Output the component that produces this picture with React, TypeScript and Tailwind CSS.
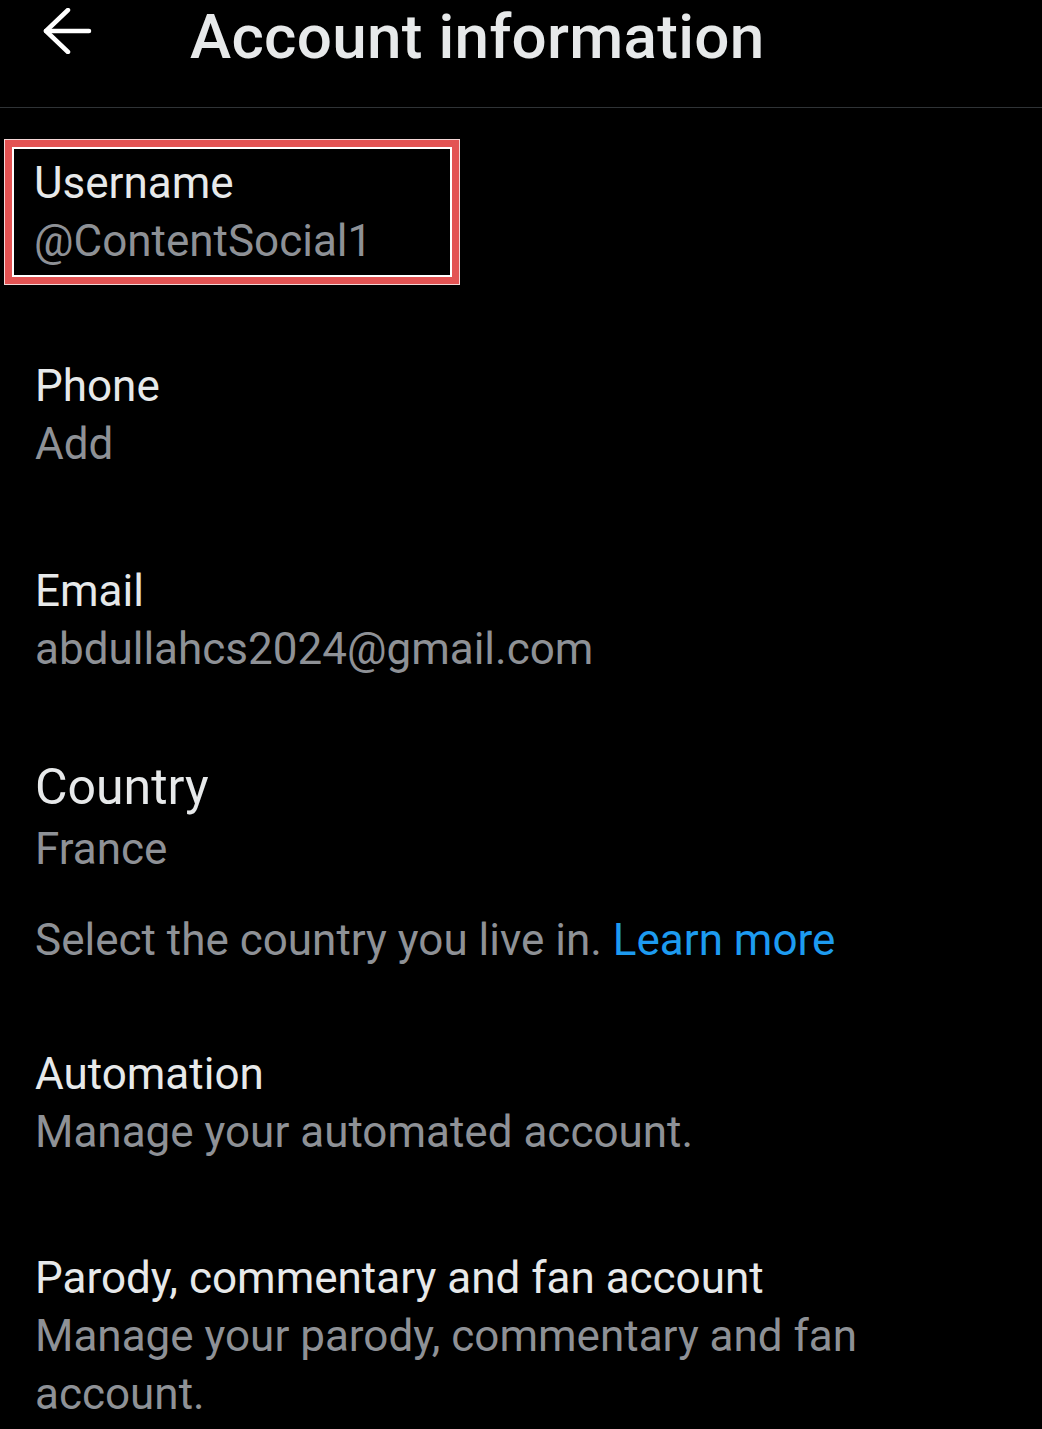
import React from 'react'

const LABEL = 'text-[44px] leading-[58px] text-[#e7e9ea]'
const VALUE = 'text-[44px] leading-[58px] text-[#8e9196]'

function Field({ label, value, className = '' }: { label: string; value: string; className?: string }) {
  return (
    <div className={`px-[35px] ${className}`}>
      <p className={LABEL}>{label}</p>
      <p className={VALUE}>{value}</p>
    </div>
  )
}

export default function App() {
  return (
    <div
      className="min-h-[1429px] w-full overflow-hidden bg-black"
      style={{ fontFamily: 'Roboto, "Noto Sans", sans-serif' }}
    >
      {/* Header */}
      <header className="flex h-[108px] items-start border-b border-[#2f3336]">
        <button className="ml-[42px] mt-[8px] flex h-[46px] w-[50px] items-center justify-center">
          <svg width="50" height="46" viewBox="0 0 50 46" fill="none" stroke="#ffffff" strokeWidth="4.5" strokeLinecap="round" strokeLinejoin="round">
            <path d="M4 23 H47" />
            <path d="M26 2 L4 23 L26 44" />
          </svg>
        </button>
        <h1 className="ml-[98px] pt-[7px] text-[62px] font-medium leading-[60px] tracking-[0.3px] text-[#e7e9ea]">
          Account information
        </h1>
      </header>

      {/* Highlighted username */}
      <div className="ml-[4px] mt-[31px] w-[456px] border border-[#f3d6d6]">
        <div className="border-[7px] border-[#e35353]">
          <div className="border-2 border-white pb-[5px] pl-[20px] pt-[5px]">
            <p className={LABEL}>Username</p>
            <p className={VALUE}>@ContentSocial1</p>
          </div>
        </div>
      </div>

      <Field label="Phone" value="Add" className="mt-[72px]" />
      <Field label="Email" value="abdullahcs2024@gmail.com" className="mt-[89px]" />

      <div className="mt-[80px] px-[35px]">
        <p className="text-[50px] leading-[58px] text-[#e7e9ea]">Country</p>
        <p className={`${VALUE} mt-[4px]`}>France</p>
        <p className={`${VALUE} mt-[33px]`}>
          Select the country you live in. <span className="text-[#1d9bf0]">Learn more</span>
        </p>
      </div>

      <Field label="Automation" value="Manage your automated account." className="mt-[76px]" />

      <div className="mt-[88px] px-[35px]">
        <p className={LABEL}>Parody, commentary and fan account</p>
        <p className={`${VALUE} max-w-[860px]`}>Manage your parody, commentary and fan account.</p>
      </div>
    </div>
  )
}
